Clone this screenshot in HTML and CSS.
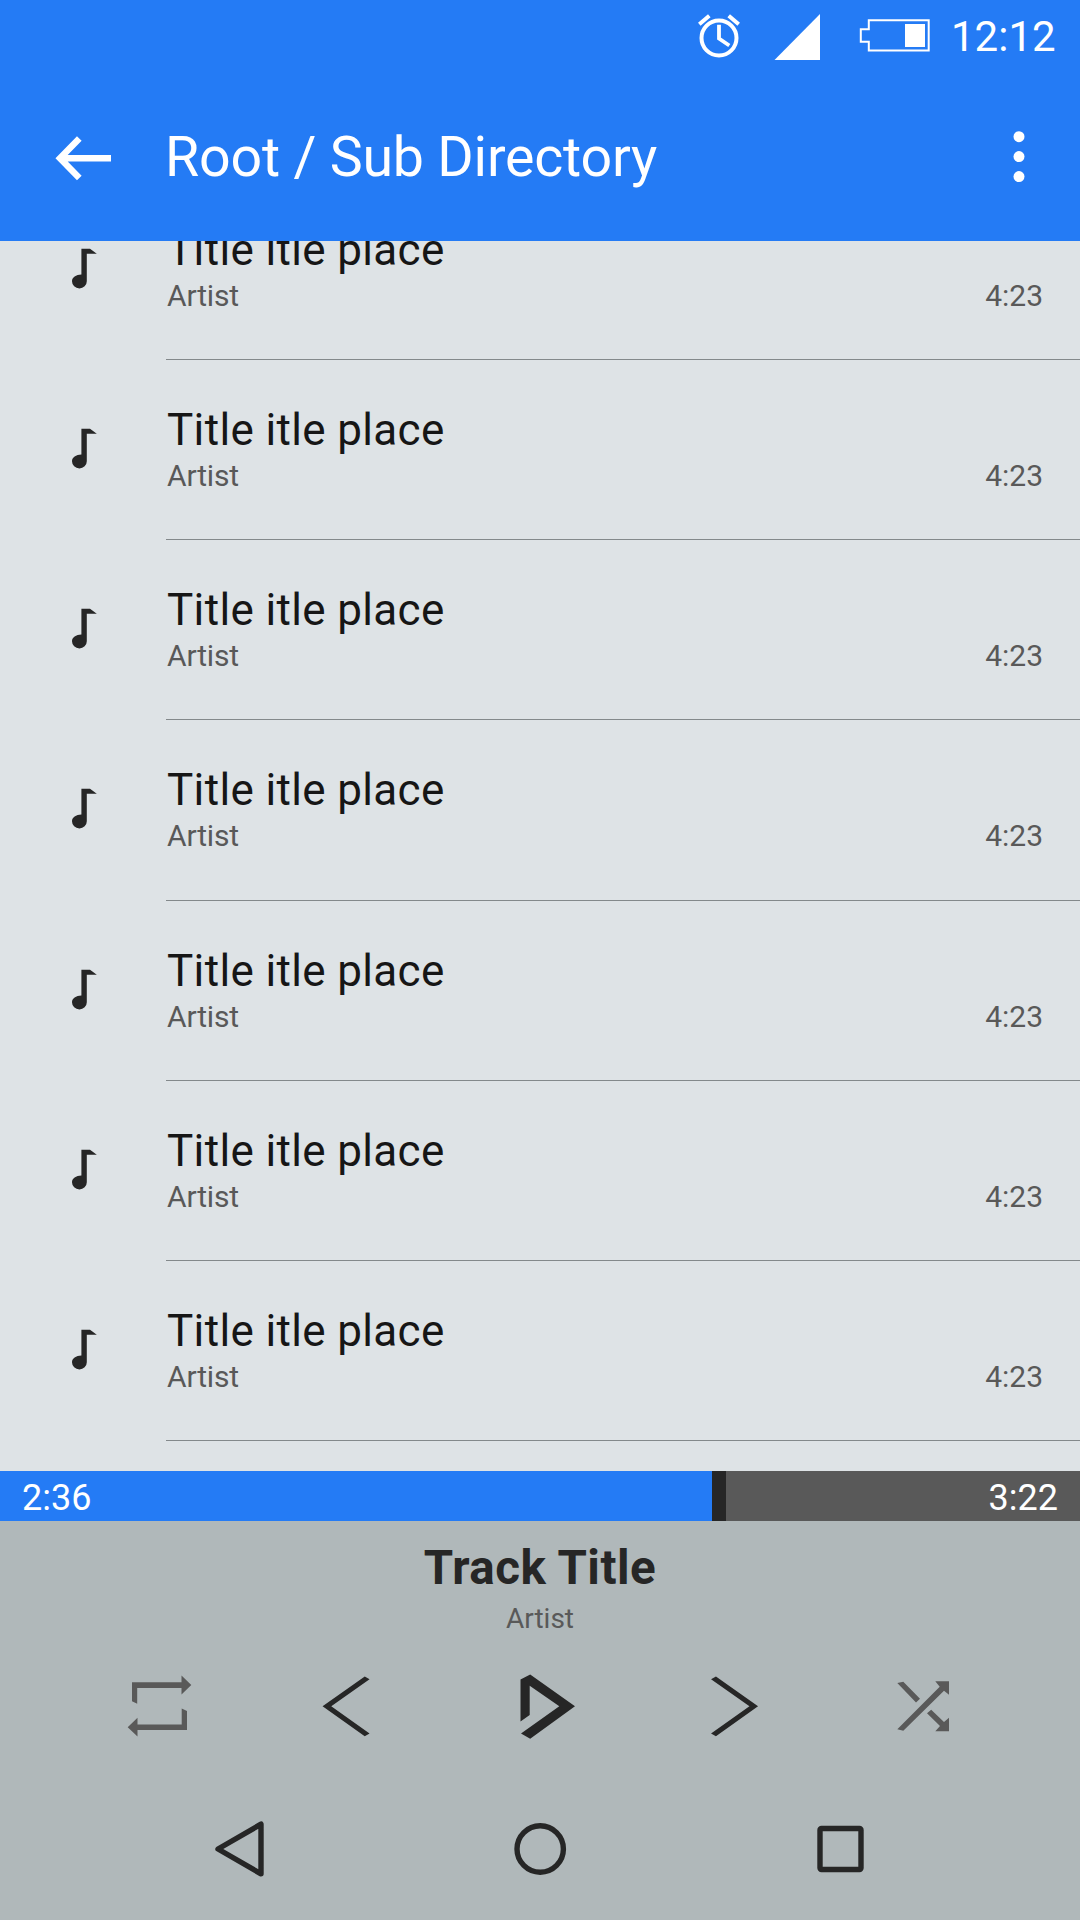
FILE: index.html
```html
<!DOCTYPE html>
<html lang="en">
<head>
<meta charset="utf-8">
<title>Root / Sub Directory</title>
<link rel="stylesheet" href="styles.css">
</head>
<body>
<svg class="defs" aria-hidden="true">
  <symbol id="note" viewBox="64 424 40 50">
    <path d="M81.4 428.8H90L96.8 433.8H86.8V461.3a7.4 7.1 0 0 1-14.8 0C72 457.4 76 454.8 81.4 454.6z"/>
  </symbol>
</svg>
<div class="screen">
  <header class="header">
    <div class="status">
      <svg class="alarm" viewBox="694 10 50 52" fill="none" stroke="#fff">
        <circle cx="719" cy="38" r="17.5" stroke-width="4"/>
        <path d="M719 24.8V38.5L729.3 45.5" stroke-width="3.8"/>
        <path d="M699.3 24.2L709.3 15.8M738.7 24.2L728.7 15.8" stroke-width="4"/>
      </svg>
      <svg class="signal" viewBox="772 10 50 52" fill="#fff"><path d="M774.5 60H820V14z"/></svg>
      <svg class="battery" viewBox="856 10 76 52">
        <path d="M868.8 20.2H928.7V50.4H868.8V41.8H860.8V29.2H868.8z" fill="none" stroke="#fff" stroke-width="2"/>
        <path d="M905 24h20v23h-20z" fill="#fff"/>
      </svg>
      <span class="clock">12:12</span>
    </div>
    <div class="toolbar">
      <svg class="back" viewBox="50 122 66 72" fill="none" stroke="#fff" stroke-width="6.5"><path d="M111 158.3H61M79.3 138.5L60 158.3L79.3 178"/></svg>
      <h1 class="heading">Root / Sub Directory</h1>
      <svg class="more" viewBox="1003 122 32 72" fill="#fff"><circle cx="1019" cy="136.7" r="5.5"/><circle cx="1019" cy="156.6" r="5.5"/><circle cx="1019" cy="176.6" r="5.5"/></svg>
    </div>
  </header>

  <main class="list">
    <div class="row"><svg class="note"><use href="#note"/></svg><div class="track"><p class="name">Title itle place</p><p class="artist">Artist</p><span class="time">4:23</span></div></div>
    <div class="row"><svg class="note"><use href="#note"/></svg><div class="track"><p class="name">Title itle place</p><p class="artist">Artist</p><span class="time">4:23</span></div></div>
    <div class="row"><svg class="note"><use href="#note"/></svg><div class="track"><p class="name">Title itle place</p><p class="artist">Artist</p><span class="time">4:23</span></div></div>
    <div class="row"><svg class="note"><use href="#note"/></svg><div class="track"><p class="name">Title itle place</p><p class="artist">Artist</p><span class="time">4:23</span></div></div>
    <div class="row"><svg class="note"><use href="#note"/></svg><div class="track"><p class="name">Title itle place</p><p class="artist">Artist</p><span class="time">4:23</span></div></div>
    <div class="row"><svg class="note"><use href="#note"/></svg><div class="track"><p class="name">Title itle place</p><p class="artist">Artist</p><span class="time">4:23</span></div></div>
    <div class="row"><svg class="note"><use href="#note"/></svg><div class="track"><p class="name">Title itle place</p><p class="artist">Artist</p><span class="time">4:23</span></div></div>
  </main>

  <div class="progress">
    <div class="played">2:36</div>
    <div class="thumb"></div>
    <div class="remaining">3:22</div>
  </div>

  <footer class="player">
    <h2 class="current">Track Title</h2>
    <p class="current-artist">Artist</p>
    <div class="controls">
      <svg class="icon muted" viewBox="124 1670 72 72">
        <path d="M132 1682.2H181.5V1675.5L191.3 1685L181.5 1694.5V1688H137.2V1703.8L132 1701.3zM187 1730H137.5V1736.5L127.7 1727.2L137.5 1717.8V1724.5H181.7V1708.5L187 1711z"/>
      </svg>
      <svg class="icon" viewBox="314.75 1670 72 72"><path d="M364.5 1676.5L369.3 1679.2L331 1706.3L369.3 1733.6L364.5 1736.3L322.3 1706.3z"/></svg>
      <svg class="icon" viewBox="505.5 1670 72 72"><path d="M520 1721.5V1679.5L529.7 1674.5L574.5 1706.3L529.7 1738.7L520.5 1733.6L558.8 1706.3L529.2 1685.8V1715z"/></svg>
      <svg class="icon" viewBox="696.25 1670 72 72"><path d="M716.2 1676.5L711.3 1679.2L749.7 1706.3L711.3 1733.6L716.2 1736.3L758.3 1706.3z"/></svg>
      <svg class="icon muted" viewBox="887 1670 72 72">
        <path d="M897.3 1683L903.3 1681.8L920 1698.7L916 1702.6zM897.3 1729.3L939.7 1686.7L935.3 1681.2H949V1694.7L944 1690.7L903.3 1730.8zM931.2 1709.7L944 1722L949 1717.7V1731.2H935.3L940 1726L927 1713.2z"/>
      </svg>
    </div>
    <nav class="nav">
      <svg class="icon line" viewBox="204 1813 72 72"><path d="M218 1849L261 1824.2V1873.8z"/></svg>
      <svg class="icon line" viewBox="504 1813 72 72"><circle cx="540.2" cy="1849" r="23.2"/></svg>
      <svg class="icon line" viewBox="804 1813 72 72"><rect x="820" y="1828.5" width="41" height="41" rx="1.5"/></svg>
    </nav>
  </footer>
</div>
</body>
</html>
```
FILE: styles.css
```css
* { box-sizing: border-box; margin: 0; padding: 0; }
body { font-family: Roboto, "Liberation Sans", sans-serif; }
.defs { display: none; }
.screen {
  width: 1080px;
  height: 1920px;
  display: flex;
  flex-direction: column;
  overflow: hidden;
  background: #dee3e6;
}
.header { flex: none; height: 241px; background: #247bf5; color: #fff; }
.status {
  height: 72px;
  padding: 10px 24px 10px 0;
  display: flex;
  justify-content: flex-end;
}
.alarm { width: 50px; height: 52px; margin-right: 28px; }
.signal { width: 50px; height: 52px; margin-right: 34px; }
.battery { width: 76px; height: 52px; }
.clock { width: 124px; padding-left: 19px; font-size: 42px; line-height: 54px; }
.toolbar {
  height: 169px;
  padding: 50px 45px 47px 50px;
  display: flex;
}
.back { width: 66px; height: 72px; }
.heading {
  flex: 1;
  padding-left: 49px;
  font-size: 55.5px;
  font-weight: 400;
  line-height: 72px;
  letter-spacing: -0.2px;
}
.more { width: 32px; height: 72px; }
.list { height: 1230px; flex: none; overflow: hidden; }
.row { height: 180.15px; display: flex; }
.row:first-child { margin-top: -61px; }
.note { width: 40px; height: 50px; margin: 64px 62px 0 64px; fill: #262626; flex: none; }
.track {
  flex: 1;
  padding: 44px 37px 0 1px;
  display: grid;
  grid-template-columns: 1fr auto;
  grid-template-rows: 52px 36px;
  row-gap: 2px;
  border-bottom: 1px solid #83898b;
}
.name { grid-column: 1 / 3; font-size: 44px; line-height: 53px; letter-spacing: 0.35px; color: #161616; }
.artist, .time { font-size: 30px; line-height: 36px; color: #595959; }
.artist { letter-spacing: -0.15px; }
.progress {
  flex: none;
  height: 50px;
  display: flex;
  color: #fff;
  font-size: 36px;
  line-height: 55px;
}
.played { width: 712px; padding-left: 22px; background: #247bf5; }
.thumb { width: 14px; background: #262626; }
.remaining { flex: 1; padding-right: 22px; background: #595959; text-align: right; }
.player { flex: 1; padding-top: 20px; background: #b0b8ba; text-align: center; color: #262626; }
.current { font-size: 47.5px; font-weight: 700; line-height: 54px; letter-spacing: 0.5px; }
.current-artist { margin-top: 7px; font-size: 28px; line-height: 34px; color: #595959; }
.controls { display: flex; justify-content: space-between; padding: 34px 121px 0 124px; }
.nav { display: flex; justify-content: space-between; padding: 71px 204px 0; }
.icon { width: 72px; height: 72px; fill: #262626; }
.icon.muted { fill: #595959; }
.icon.line { fill: none; stroke: #262626; stroke-width: 5.4; stroke-linejoin: round; }
```
